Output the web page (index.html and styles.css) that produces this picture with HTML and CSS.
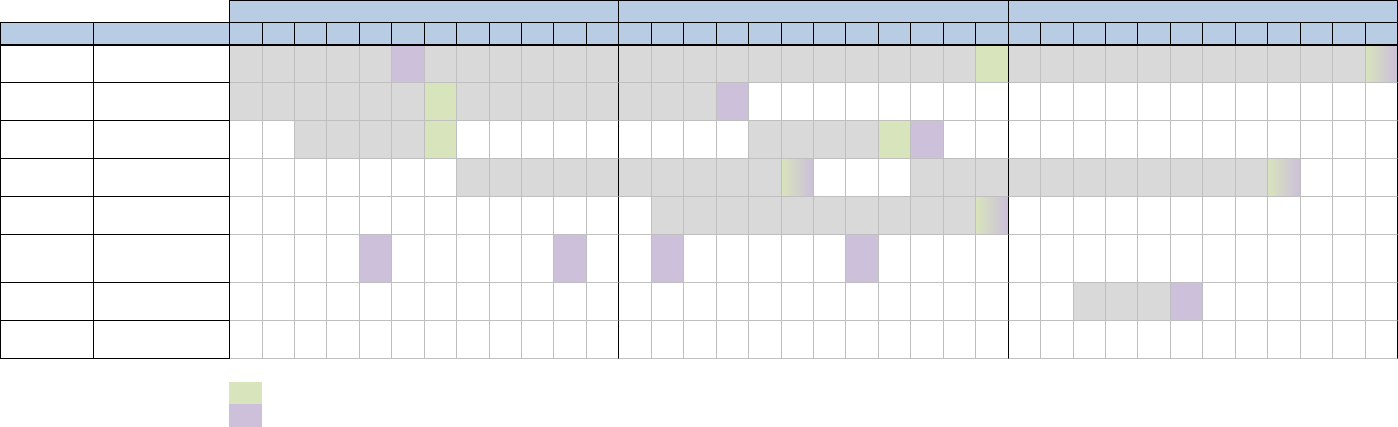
FILE: index.html
```html
<!DOCTYPE html>
<html lang="en">
<head>
<meta charset="utf-8">
<title>Schedule</title>
<link rel="stylesheet" href="styles.css">
</head>
<body>
<div class="sheet">
  <div class="row h1">
    <div class="blank"></div>
    <div class="grp"></div>
    <div class="grp"></div>
    <div class="grp"></div>
  </div>
  <div class="row h2">
    <div></div><div></div>
    <div></div><div></div><div></div><div></div><div></div><div></div><div></div><div></div><div></div><div></div><div></div><div></div>
    <div></div><div></div><div></div><div></div><div></div><div></div><div></div><div></div><div></div><div></div><div></div><div></div>
    <div></div><div></div><div></div><div></div><div></div><div></div><div></div><div></div><div></div><div></div><div></div><div></div>
  </div>
  <div class="row r first">
    <div class="lab"></div><div class="lab"></div>
    <div class="c g"></div><div class="c g"></div><div class="c g"></div><div class="c g"></div><div class="c g"></div><div class="c pu"></div><div class="c g"></div><div class="c g"></div><div class="c g"></div><div class="c g"></div><div class="c g"></div><div class="c g"></div>
    <div class="c g"></div><div class="c g"></div><div class="c g"></div><div class="c g"></div><div class="c g"></div><div class="c g"></div><div class="c g"></div><div class="c g"></div><div class="c g"></div><div class="c g"></div><div class="c g"></div><div class="c gr"></div>
    <div class="c g"></div><div class="c g"></div><div class="c g"></div><div class="c g"></div><div class="c g"></div><div class="c g"></div><div class="c g"></div><div class="c g"></div><div class="c g"></div><div class="c g"></div><div class="c g"></div><div class="c gd"></div>
  </div>
  <div class="row r">
    <div class="lab"></div><div class="lab"></div>
    <div class="c g"></div><div class="c g"></div><div class="c g"></div><div class="c g"></div><div class="c g"></div><div class="c g"></div><div class="c gr"></div><div class="c g"></div><div class="c g"></div><div class="c g"></div><div class="c g"></div><div class="c g"></div>
    <div class="c g"></div><div class="c g"></div><div class="c g"></div><div class="c pu"></div><div class="c"></div><div class="c"></div><div class="c"></div><div class="c"></div><div class="c"></div><div class="c"></div><div class="c"></div><div class="c"></div>
    <div class="c"></div><div class="c"></div><div class="c"></div><div class="c"></div><div class="c"></div><div class="c"></div><div class="c"></div><div class="c"></div><div class="c"></div><div class="c"></div><div class="c"></div><div class="c"></div>
  </div>
  <div class="row r">
    <div class="lab"></div><div class="lab"></div>
    <div class="c"></div><div class="c"></div><div class="c g"></div><div class="c g"></div><div class="c g"></div><div class="c g"></div><div class="c gr"></div><div class="c"></div><div class="c"></div><div class="c"></div><div class="c"></div><div class="c"></div>
    <div class="c"></div><div class="c"></div><div class="c"></div><div class="c"></div><div class="c g"></div><div class="c g"></div><div class="c g"></div><div class="c g"></div><div class="c gr"></div><div class="c pu"></div><div class="c"></div><div class="c"></div>
    <div class="c"></div><div class="c"></div><div class="c"></div><div class="c"></div><div class="c"></div><div class="c"></div><div class="c"></div><div class="c"></div><div class="c"></div><div class="c"></div><div class="c"></div><div class="c"></div>
  </div>
  <div class="row r">
    <div class="lab"></div><div class="lab"></div>
    <div class="c"></div><div class="c"></div><div class="c"></div><div class="c"></div><div class="c"></div><div class="c"></div><div class="c"></div><div class="c g"></div><div class="c g"></div><div class="c g"></div><div class="c g"></div><div class="c g"></div>
    <div class="c g"></div><div class="c g"></div><div class="c g"></div><div class="c g"></div><div class="c g"></div><div class="c gd"></div><div class="c"></div><div class="c"></div><div class="c"></div><div class="c g"></div><div class="c g"></div><div class="c g"></div>
    <div class="c g"></div><div class="c g"></div><div class="c g"></div><div class="c g"></div><div class="c g"></div><div class="c g"></div><div class="c g"></div><div class="c g"></div><div class="c gd"></div><div class="c"></div><div class="c"></div><div class="c"></div>
  </div>
  <div class="row r">
    <div class="lab"></div><div class="lab"></div>
    <div class="c"></div><div class="c"></div><div class="c"></div><div class="c"></div><div class="c"></div><div class="c"></div><div class="c"></div><div class="c"></div><div class="c"></div><div class="c"></div><div class="c"></div><div class="c"></div>
    <div class="c"></div><div class="c g"></div><div class="c g"></div><div class="c g"></div><div class="c g"></div><div class="c g"></div><div class="c g"></div><div class="c g"></div><div class="c g"></div><div class="c g"></div><div class="c g"></div><div class="c gd"></div>
    <div class="c"></div><div class="c"></div><div class="c"></div><div class="c"></div><div class="c"></div><div class="c"></div><div class="c"></div><div class="c"></div><div class="c"></div><div class="c"></div><div class="c"></div><div class="c"></div>
  </div>
  <div class="row r tall">
    <div class="lab"></div><div class="lab"></div>
    <div class="c"></div><div class="c"></div><div class="c"></div><div class="c"></div><div class="c pu"></div><div class="c"></div><div class="c"></div><div class="c"></div><div class="c"></div><div class="c"></div><div class="c pu"></div><div class="c"></div>
    <div class="c"></div><div class="c pu"></div><div class="c"></div><div class="c"></div><div class="c"></div><div class="c"></div><div class="c"></div><div class="c pu"></div><div class="c"></div><div class="c"></div><div class="c"></div><div class="c"></div>
    <div class="c"></div><div class="c"></div><div class="c"></div><div class="c"></div><div class="c"></div><div class="c"></div><div class="c"></div><div class="c"></div><div class="c"></div><div class="c"></div><div class="c"></div><div class="c"></div>
  </div>
  <div class="row r">
    <div class="lab"></div><div class="lab"></div>
    <div class="c"></div><div class="c"></div><div class="c"></div><div class="c"></div><div class="c"></div><div class="c"></div><div class="c"></div><div class="c"></div><div class="c"></div><div class="c"></div><div class="c"></div><div class="c"></div>
    <div class="c"></div><div class="c"></div><div class="c"></div><div class="c"></div><div class="c"></div><div class="c"></div><div class="c"></div><div class="c"></div><div class="c"></div><div class="c"></div><div class="c"></div><div class="c"></div>
    <div class="c"></div><div class="c"></div><div class="c g"></div><div class="c g"></div><div class="c g"></div><div class="c pu"></div><div class="c"></div><div class="c"></div><div class="c"></div><div class="c"></div><div class="c"></div><div class="c"></div>
  </div>
  <div class="row r">
    <div class="lab"></div><div class="lab"></div>
    <div class="c"></div><div class="c"></div><div class="c"></div><div class="c"></div><div class="c"></div><div class="c"></div><div class="c"></div><div class="c"></div><div class="c"></div><div class="c"></div><div class="c"></div><div class="c"></div>
    <div class="c"></div><div class="c"></div><div class="c"></div><div class="c"></div><div class="c"></div><div class="c"></div><div class="c"></div><div class="c"></div><div class="c"></div><div class="c"></div><div class="c"></div><div class="c"></div>
    <div class="c"></div><div class="c"></div><div class="c"></div><div class="c"></div><div class="c"></div><div class="c"></div><div class="c"></div><div class="c"></div><div class="c"></div><div class="c"></div><div class="c"></div><div class="c"></div>
  </div>
</div>
<div class="legend">
  <div class="sw gr"></div>
  <div class="sw pu"></div>
</div>
</body>
</html>
```
FILE: styles.css
```css
* {
  box-sizing: border-box;
  margin: 0;
  padding: 0;
}

body {
  margin: 0;
  background: #ffffff;
  font-family: "Liberation Sans", Arial, sans-serif;
  font-size: 11px;
}

.sheet {
  display: flex;
  flex-direction: column;
  width: 1398px;
}

.row {
  display: grid;
  grid-template-columns:
    94px 136px
    33px 32px 32px 33px 32px 33px 32px 33px 32px 32px 33px 32px
    33px 32px 33px 32px 33px 32px 32px 33px 32px 33px 32px 33px
    32px 33px 32px 32px 33px 32px 33px 32px 33px 32px 33px 32px;
}

.h1 { height: 23px; }
.h2 { height: 23px; }
.r { height: 38px; }
.r.first { height: 37px; }
.r.tall { height: 48px; }

.blank {
  grid-column: 1 / 3;
  border-right: 1px solid #000;
  border-bottom: 1px solid #000;
}

.grp {
  grid-column: span 12;
  background: #b8cce4;
  border-top: 1px solid #000;
  border-right: 1px solid #000;
  border-bottom: 1px solid #000;
}

.h2 > div {
  background: #b8cce4;
  border-right: 1px solid #000;
  border-bottom: 2px solid #000;
}

.h2 > div:first-child {
  border-left: 1px solid #000;
}

.r > .lab {
  border-right: 1px solid #000;
  border-bottom: 1px solid #000;
}

.r > .lab:first-child {
  border-left: 1px solid #000;
}

.r > .c {
  border-right: 1px solid #bfbfbf;
  border-bottom: 1px solid #bfbfbf;
}

.r > .c:nth-child(14),
.r > .c:nth-child(26),
.r > .c:nth-child(38) {
  border-right-color: #000;
}

.g { background: #d9d9d9; }
.gr { background: #d8e4bc; }
.pu { background: #ccc0da; }
.gd { background: linear-gradient(to right, #d8e4bc, #ccc0da); }

.legend {
  display: flex;
  flex-direction: column;
  margin: 23px 0 0 229px;
}

.sw { width: 33px; }
.sw.gr { height: 22px; }
.sw.pu { height: 23px; }
```
